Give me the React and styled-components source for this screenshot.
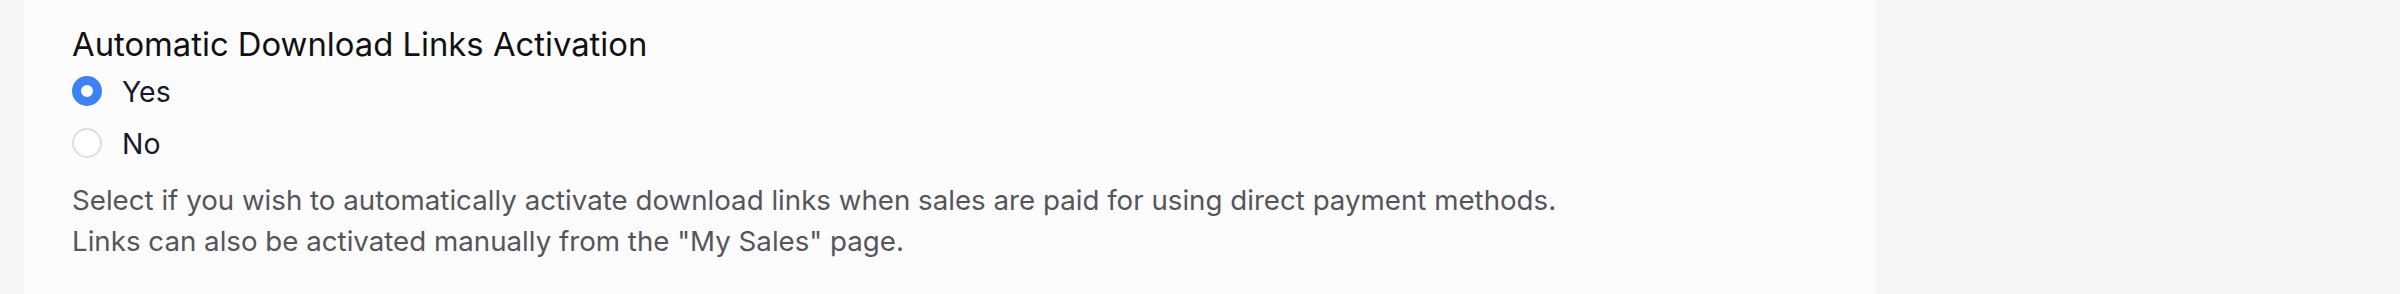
import styled, { createGlobalStyle } from "styled-components";

const GlobalStyle = createGlobalStyle`
  html, body {
    margin: 0;
    padding: 0;
    background: #f7f6f4;
  }
  body {
    font-family: Inter, "Noto Sans", sans-serif;
  }
`;

const Page = styled.div`
  display: flex;
  height: 294px;
  padding-left: 24px;
  background: #f7f6f4;
  overflow: hidden;
`;

const Card = styled.section`
  width: 1852px;
  background: #fcfcfc;
  padding: 22px 48px 0;
  box-sizing: border-box;
`;

const Title = styled.h3`
  margin: 0;
  font-size: 32.8px;
  font-weight: 400;
  line-height: 44px;
  color: #111111;
`;

const Options = styled.div`
  display: flex;
  flex-direction: column;
  gap: 22px;
  margin-top: 10px;
`;

const Option = styled.label`
  display: flex;
  align-items: center;
  gap: 20px;
  height: 30px;
  font-size: 28.4px;
  color: #161b2b;
  cursor: pointer;
`;

const Dot = styled.span`
  width: 30px;
  height: 30px;
  border-radius: 50%;
  box-sizing: border-box;
  flex-shrink: 0;
  background: #ffffff;
  border: ${({ $checked }) =>
    $checked ? "9px solid #3b82f6" : "2px solid #dcdee3"};
`;

const Help = styled.p`
  margin: 22px 0 0;
  font-size: 27.7px;
  line-height: 41px;
  color: #55565c;
`;

const options = [
  { label: "Yes", checked: true },
  { label: "No", checked: false },
];

export default function App() {
  return (
    <>
      <GlobalStyle />
      <Page>
        <Card>
          <Title>Automatic Download Links Activation</Title>
          <Options>
            {options.map((o) => (
              <Option key={o.label}>
                <Dot $checked={o.checked} />
                {o.label}
              </Option>
            ))}
          </Options>
          <Help>
            Select if you wish to automatically activate download links when
            sales are paid for using direct payment methods.
            <br />
            Links can also be activated manually from the "My Sales" page.
          </Help>
        </Card>
      </Page>
    </>
  );
}
